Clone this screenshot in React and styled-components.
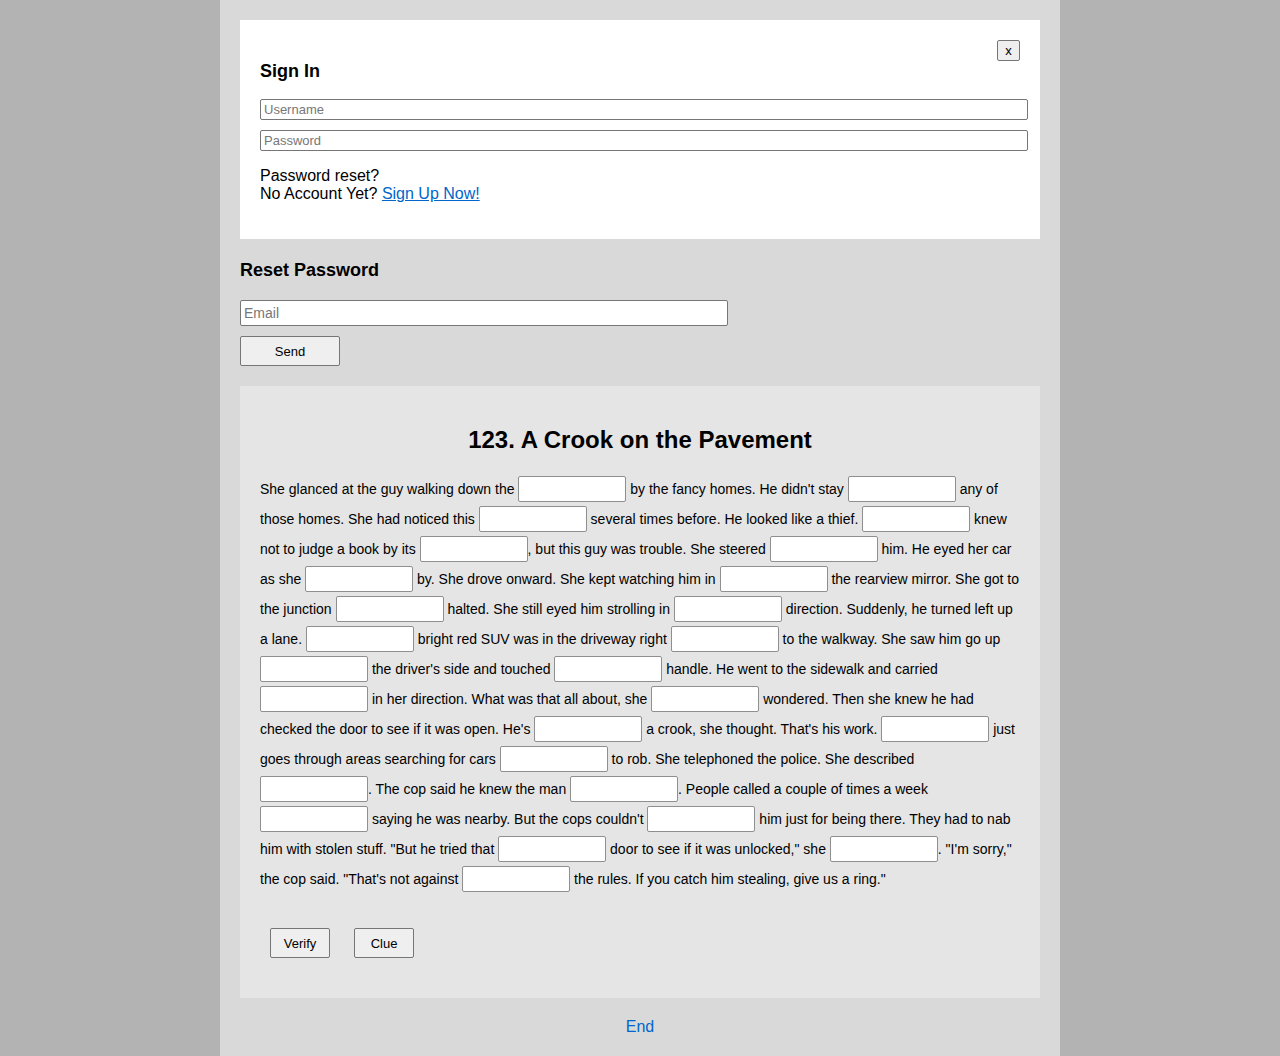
import { Fragment } from "react";
import styled, { createGlobalStyle } from "styled-components";

const GlobalStyle = createGlobalStyle`
  body {
    margin: 0;
    background: #b3b3b3;
    font-family: "Liberation Sans", Arial, sans-serif;
    color: #000;
  }
`;

const Column = styled.div`
  width: 840px;
  margin: 0 auto;
  min-height: 100vh;
  background: #d9d9d9;
  padding: 20px;
  box-sizing: border-box;
`;

const SignInBox = styled.section`
  background: #fff;
  padding: 20px 20px 36px;
`;

const CloseRow = styled.div`
  display: flex;
  justify-content: flex-end;
`;

const CloseButton = styled.button`
  width: 23px;
  height: 21px;
  padding: 0;
  font-family: "Liberation Sans", Arial, sans-serif;
  font-size: 13px;
  background: #efefef;
  border: 1px solid #767676;
  border-radius: 2px;
  color: #000;
`;

const Heading = styled.h3`
  font-size: 18px;
  line-height: 21px;
  font-weight: bold;
  margin: ${({ $top }) => $top || 0}px 0 ${({ $bottom }) => $bottom || 0}px;
`;

const WideInput = styled.input`
  display: block;
  width: calc(100% + 8px);
  height: 21px;
  box-sizing: border-box;
  padding: 1px 3px;
  margin-top: ${({ $top }) => $top}px;
  font-family: "Liberation Sans", Arial, sans-serif;
  font-size: 13px;
  border: 1px solid #767676;
  border-radius: 2px;
  &::placeholder {
    color: #777;
  }
`;

const InfoText = styled.div`
  margin-top: 16px;
  font-size: 16px;
  line-height: 18px;
`;

const Link = styled.a`
  color: #0066cc;
  text-decoration: ${({ $plain }) => ($plain ? "none" : "underline")};
`;

const EmailInput = styled.input`
  display: block;
  width: 488px;
  height: 26px;
  box-sizing: border-box;
  padding: 0 3px;
  font-family: "Liberation Sans", Arial, sans-serif;
  font-size: 14px;
  border: 1px solid #767676;
  border-radius: 2px;
  &::placeholder {
    color: #777;
  }
`;

const Button = styled.button`
  width: ${({ $w }) => $w}px;
  height: 30px;
  padding: 0;
  font-family: "Liberation Sans", Arial, sans-serif;
  font-size: 13px;
  color: #000;
  background: #efefef;
  border: 1px solid #767676;
  border-radius: 2px;
`;

const SendButton = styled(Button)`
  display: block;
  margin-top: 10px;
`;

const QuizBox = styled.section`
  margin-top: 20px;
  background: #e5e5e5;
  padding: 40px 20px 40px;
`;

const QuizTitle = styled.h2`
  margin: 0;
  text-align: center;
  font-size: 24px;
  line-height: 28px;
  font-weight: bold;
`;

const Story = styled.p`
  margin: 20px 0 0;
  font-size: 14px;
  line-height: 30px;
`;

const Blank = styled.input`
  width: 108px;
  height: 26px;
  box-sizing: border-box;
  vertical-align: middle;
  border: 1px solid #8f8f8f;
  border-radius: 2px;
  background: #fff;
  padding: 0 3px;
  font-family: "Liberation Sans", Arial, sans-serif;
  font-size: 14px;
  position: relative;
  top: -1px;
`;

const Actions = styled.div`
  display: flex;
  gap: 24px;
  margin: 34px 0 0 10px;
`;

const Footer = styled.div`
  text-align: center;
  font-size: 16px;
  line-height: 18px;
  padding-top: 20px;
`;

const STORY =
  `She glanced at the guy walking down the ___ by the fancy homes. He didn't stay ___ any of those homes. She had noticed this ___ several times before. He looked like a thief. ___ knew not to judge a book by its ___, but this guy was trouble. She steered ___ him. He eyed her car as she ___ by. She drove onward. She kept watching him in ___ the rearview mirror. She got to the junction ___ halted. She still eyed him strolling in ___ direction. Suddenly, he turned left up a lane. ___ bright red SUV was in the driveway right ___ to the walkway. She saw him go up ___ the driver's side and touched ___ handle. He went to the sidewalk and carried ___ in her direction. What was that all about, she ___ wondered. Then she knew he had checked the door to see if it was open. He's ___ a crook, she thought. That's his work. ___ just goes through areas searching for cars ___ to rob. She telephoned the police. She described ___. The cop said he knew the man ___. People called a couple of times a week ___ saying he was nearby. But the cops couldn't ___ him just for being there. They had to nab him with stolen stuff. "But he tried that ___ door to see if it was unlocked," she ___. "I'm sorry," the cop said. "That's not against ___ the rules. If you catch him stealing, give us a ring."`;

export default function App() {
  const parts = STORY.split("___");

  return (
    <>
      <GlobalStyle />
      <Column>
        <SignInBox>
          <CloseRow>
            <CloseButton>x</CloseButton>
          </CloseRow>
          <Heading>Sign In</Heading>
          <WideInput $top={17} placeholder="Username" />
          <WideInput $top={10} type="password" placeholder="Password" />
          <InfoText>
            Password reset?
            <br />
            No Account Yet? <Link href="#">Sign Up Now!</Link>
          </InfoText>
        </SignInBox>

        <Heading $top={21} $bottom={19}>
          Reset Password
        </Heading>
        <EmailInput placeholder="Email" />
        <SendButton $w={100}>Send</SendButton>

        <QuizBox>
          <QuizTitle>123. A Crook on the Pavement</QuizTitle>
          <Story>
            {parts.map((text, i) => (
              <Fragment key={i}>
                {text}
                {i < parts.length - 1 && <Blank />}
              </Fragment>
            ))}
          </Story>
          <Actions>
            <Button $w={60}>Verify</Button>
            <Button $w={60}>Clue</Button>
          </Actions>
        </QuizBox>

        <Footer>
          <Link href="#" $plain>
            End
          </Link>
        </Footer>
      </Column>
    </>
  );
}
